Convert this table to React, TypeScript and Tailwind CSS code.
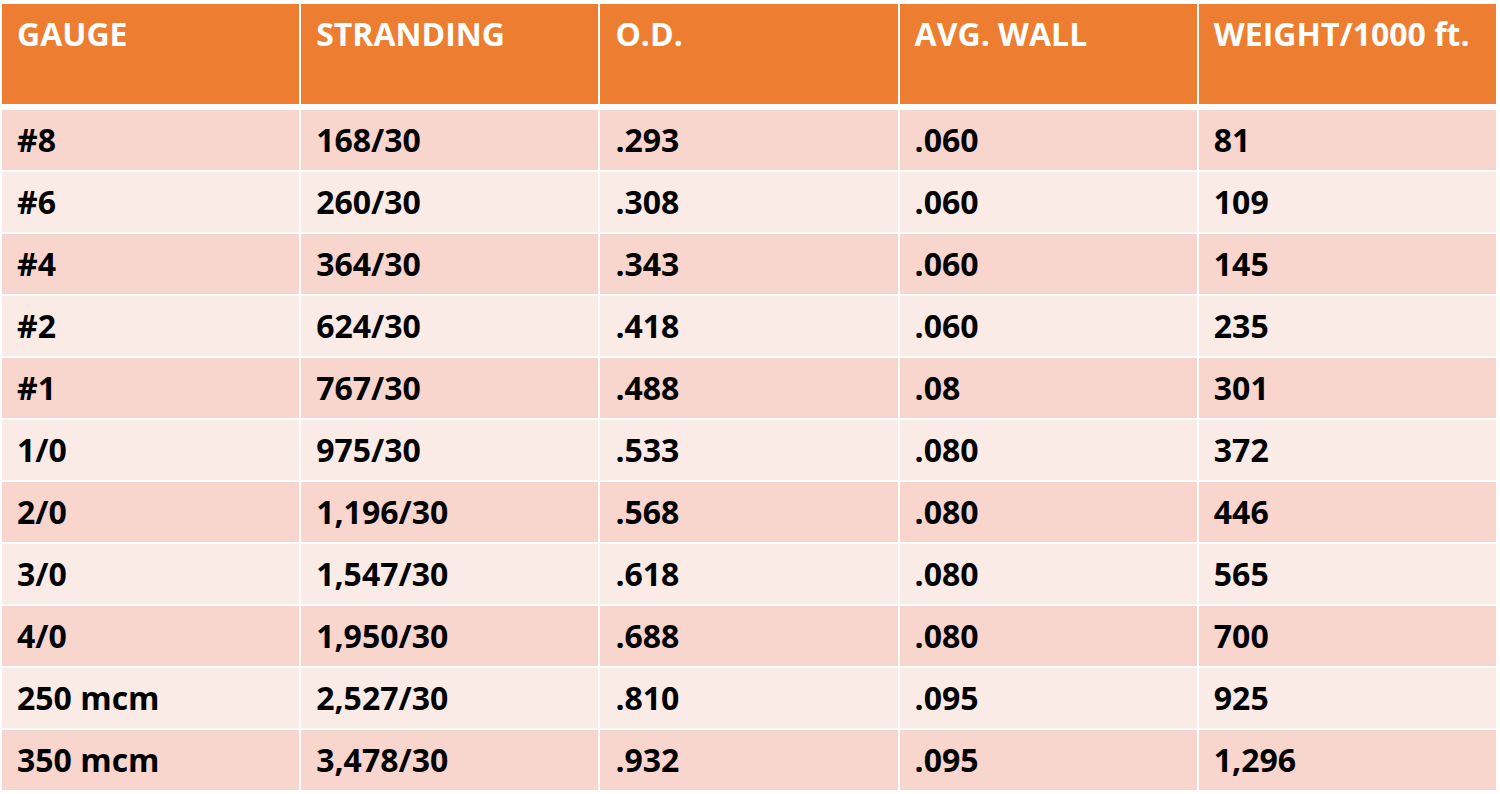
const headers = ["GAUGE", "STRANDING", "O.D.", "AVG. WALL", "WEIGHT/1000 ft."];

const rows: string[][] = [
  ["#8", "168/30", ".293", ".060", "81"],
  ["#6", "260/30", ".308", ".060", "109"],
  ["#4", "364/30", ".343", ".060", "145"],
  ["#2", "624/30", ".418", ".060", "235"],
  ["#1", "767/30", ".488", ".08", "301"],
  ["1/0", "975/30", ".533", ".080", "372"],
  ["2/0", "1,196/30", ".568", ".080", "446"],
  ["3/0", "1,547/30", ".618", ".080", "565"],
  ["4/0", "1,950/30", ".688", ".080", "700"],
  ["250 mcm", "2,527/30", ".810", ".095", "925"],
  ["350 mcm", "3,478/30", ".932", ".095", "1,296"],
];

export default function App() {
  return (
    <div className="min-h-[794px] w-[1500px] bg-white pl-[2px] pt-[4px] font-['Open_Sans',sans-serif]">
      <div className="w-[1494px]">
        {/* header */}
        <div className="grid h-[100px] grid-cols-5 gap-x-[2px]">
          {headers.map((h) => (
            <div
              key={h}
              className="bg-[#ed7d31] pl-[15px] pt-[8px] text-[32px] font-bold leading-[1.362] text-white"
            >
              {h}
            </div>
          ))}
        </div>

        {/* body */}
        <div className="mt-[6px] flex flex-col gap-y-[2px]">
          {rows.map((row, i) => (
            <div key={row[0]} className="grid h-[60px] grid-cols-5 gap-x-[2px]">
              {row.map((cell, j) => (
                <div
                  key={j}
                  className={`flex items-center pl-[15px] text-[32px] font-bold text-black ${
                    i % 2 === 0 ? "bg-[#f8d6ce]" : "bg-[#fbebe7]"
                  }`}
                >
                  {cell}
                </div>
              ))}
            </div>
          ))}
        </div>
      </div>
    </div>
  );
}
